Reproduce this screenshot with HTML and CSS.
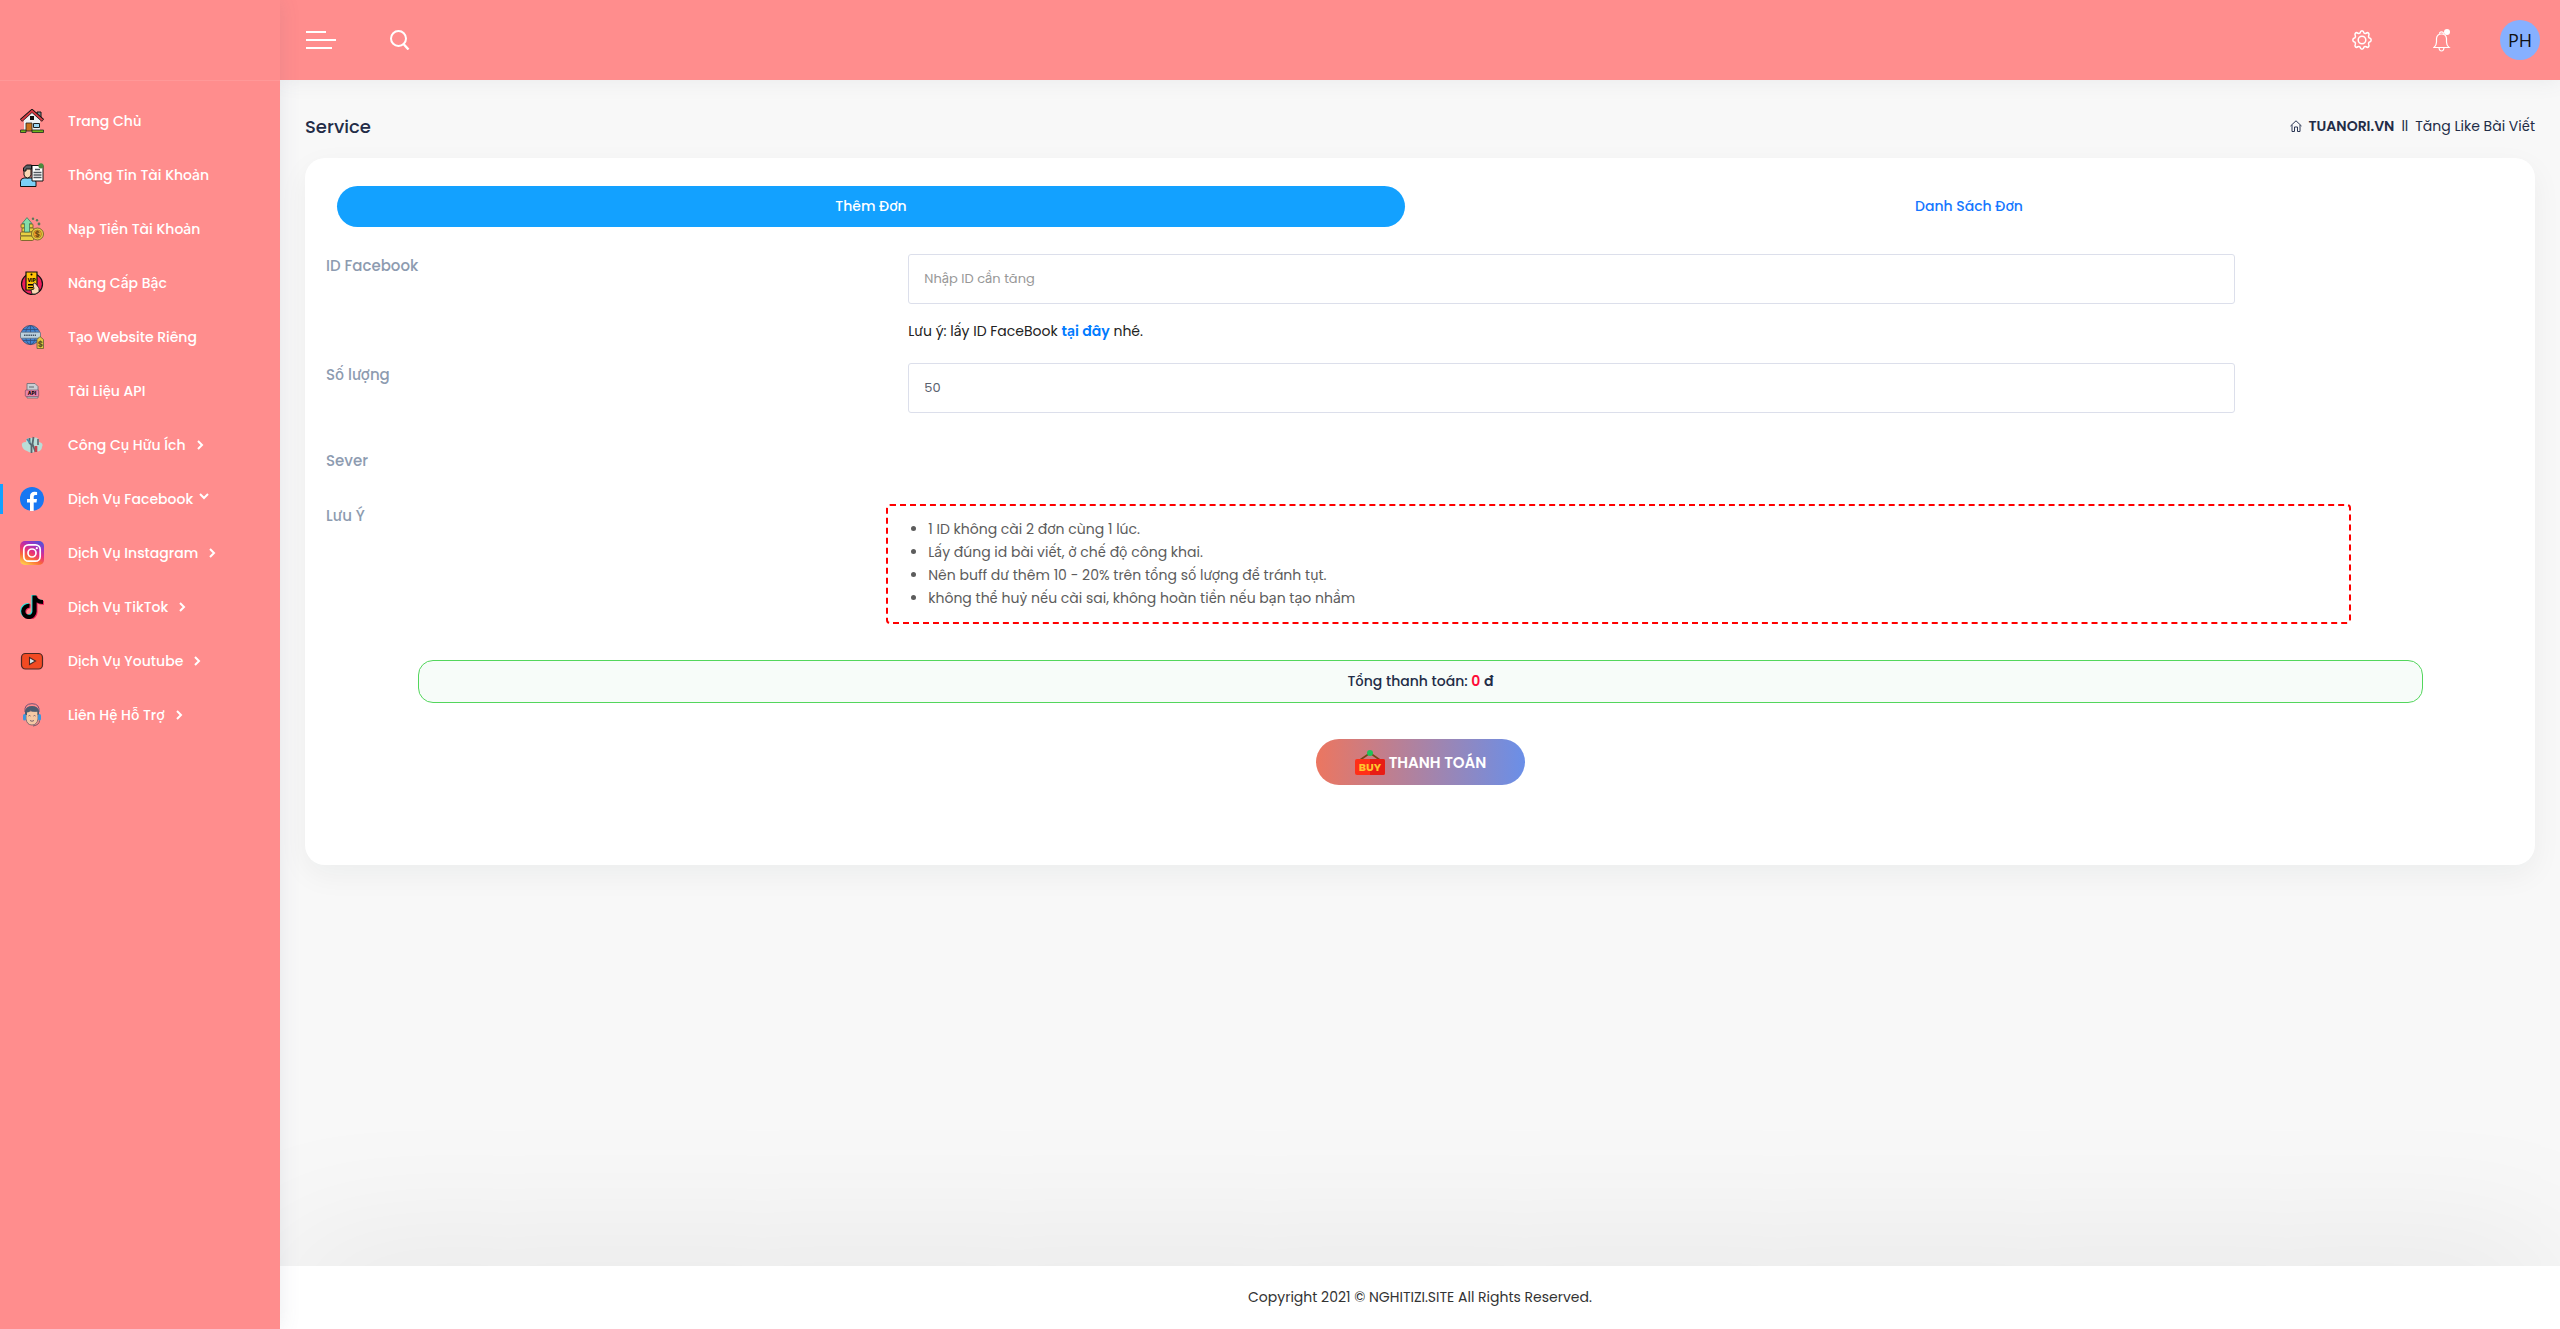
FILE: index.html
```
<!DOCTYPE html>
<html lang="vi">
<head>
  <meta charset="UTF-8" />
  <meta name="viewport" content="width=device-width, initial-scale=1" />
  <title>Tăng Like Bài Viết</title>
  <link rel="stylesheet" href="styles.css">
</head>
<body>

  <div class="layout">
    <aside class="sidebar">
      <div class="brand"></div>
      <nav class="menu">
        <a href="#">
          <svg class="icon" viewBox="0 0 24 24"><path fill="#7b8d94" stroke="#111" d="M17 3h4v7h-4z"/><path fill="#eef2f5" d="M4 11l8-8 8 8v10H4z"/><path fill="none" stroke="#111" stroke-width="3.4" d="M1 11.500L12 1.800l11 9.700"/><path fill="none" stroke="#d83c44" stroke-width="1.800" d="M1.500 11.200L12 2l10.500 9.200"/><path d="M10 7h4v4h-4z" fill="#111"/><path fill="#c8711c" stroke="#222" stroke-width=".8" d="M6 14h6v8H6z"/><path fill="#9bd6f4" stroke="#222" d="M13.500 14.500h6v4h-6z"/><path fill="#6fb51b" stroke="#222" stroke-width=".8" d="M.5 21H6v2.500H.5zM12 21h11.500v2.500H12z"/></svg>
          <span>Trang Chủ</span>
        </a>
        <a href="#">
          <svg class="icon" viewBox="0 0 24 24"><path fill="#7cd0f7" stroke="#111" d="M.5 23.500v-5q0-3 3.500-3.500h8q4 .5 4 4v4.500z"/><path fill="#f8d6b4" stroke="#111" d="M4 5h7v7q-1 3-3.500 3T4 12z"/><path fill="#596066" stroke="#111" d="M3.500 8V5l3-3h5v4H6v2z"/><path fill="#fff" stroke="#111" d="M12 2.500h11v15.500H12z"/><path stroke="#50585f" stroke-width="1.500" d="M15 6.500h5M13.500 9.500h8M13.500 12h8M13.500 14.500h8"/><circle cx="21" cy="2.800" r="2.600" fill="#4c8a3d"/></svg>
          <span>Thông Tin Tài Khoản</span>
        </a>
        <a href="#">
          <svg class="icon" viewBox="0 0 24 24"><g fill="#e8cf43" stroke="#756228" stroke-width=".9"><rect x="1" y="7" width="12" height="4" rx="1"/><rect x="2" y="11" width="12" height="4" rx="1"/><rect x=".5" y="15" width="13" height="4" rx="1"/><rect x=".5" y="19" width="13" height="4.500" rx="1"/><circle cx="17.500" cy="17" r="6"/></g><circle cx="17.500" cy="17" r="4" fill="#f3a72f" stroke="#8a6a20" stroke-width=".6"/><text x="17.500" y="20" class="tiny" fill="#6e4c14">$</text><path fill="#83dcaa" stroke="#44765b" stroke-width=".8" d="M7 .6l5 6H9.500V15h-5V6.600H2z"/><g fill="#58795a"><circle cx="13" cy="1.800" r="1.200"/><circle cx="17" cy="3.300" r="1.200"/><circle cx="19" cy="7" r="1.400"/></g></svg>
          <span>Nạp Tiền Tài Khoản</span>
        </a>
        <a href="#">
          <svg class="icon" viewBox="0 0 24 24"><circle cx="12" cy="13" r="10.500" fill="#ee1d5b" stroke="#111" stroke-width="1.200"/><path fill="#ffc107" stroke="#111" stroke-width="1.200" d="M6 1h11v18H6z"/><circle cx="11.500" cy="3.500" r="1"/><text x="11.500" y="11" class="vip">VIP</text><path d="M8 13h7v1.500H8zM8 16h5v1.200H8z"/><path fill="#fbd9b5" stroke="#111" stroke-width=".8" d="M11 19l3-1-1-5q2-2 3 0l3 4v4q-4 3-7 2z"/></svg>
          <span>Nâng Cấp Bậc</span>
        </a>
        <a href="#">
          <svg class="icon" viewBox="0 0 24 24"><circle cx="10.500" cy="10" r="9.600" fill="#4485d0" stroke="#454d68" stroke-width=".8"/><g fill="none" stroke="#304d7c" stroke-width=".8"><ellipse cx="10.500" cy="10" rx="5" ry="9.500"/><path d="M10.500.5v19M3 4.500h15M3 15.500h15"/></g><rect x=".5" y="7.200" width="20" height="6" rx=".8" fill="#bcd1dc" stroke="#5b6b7c" stroke-width=".7"/><path stroke="#435466" stroke-width="1.600" stroke-dasharray="1.500 .7" d="M4 10.200h12"/><path fill="#e6c73e" stroke="#685d34" stroke-width=".8" d="M17 14.500l3-3 3.500 3v9H17z"/><text x="20.300" y="22" class="tiny" fill="#5f5121">$</text></svg>
          <span>Tạo Website Riêng</span>
        </a>
        <a href="#">
          <svg class="icon" viewBox="0 0 24 24"><path fill="#c9ced3" stroke="#686c73" stroke-width=".8" d="M7 4.500h8l3 3V19H7z"/><path stroke="#60666d" d="M9 8h5"/><rect x="5.300" y="11" width="13.400" height="6.500" rx="1" fill="#ec83a8" stroke="#6c465a" stroke-width=".6"/><text x="12" y="16" class="api">API</text></svg>
          <span>Tài Liệu API</span>
        </a>
        <a href="#">
          <svg class="icon" viewBox="0 0 24 24"><path fill="#b9ddd7" d="M2 13q-1-4 4-4 0-5 6-4 7-2 7 4 5 1 3 5 0 5-8 5-3 2-7-1-4-1-5-5z"/><g fill="none" stroke-width="1.800"><path stroke="#59676f" d="M9.500 5v5l2 2v8M13.500 4l-1 7 3 8"/><path stroke="#4b89a8" d="M7 6l3 4"/><path stroke="#c9414b" stroke-width="2.600" d="M16 13v6"/><path stroke="#63737a" d="M18 6v6"/></g></svg>
          <span>Công Cụ Hữu Ích</span>
          <svg class="arrow" viewBox="0 0 10 10"><path d="M3 1l4 4-4 4"/></svg>
        </a>
        <a href="#" class="active">
          <svg class="icon" viewBox="0 0 24 24"><circle cx="12" cy="12" r="12" fill="#1877f2"/><path fill="#fff" d="M10 24v-8.500H7V12h3V9.400C10 6.400 11.800 4.800 14.500 4.800q1.300 0 2.600.2v3h-1.500c-1.500 0-1.900.9-1.900 1.900V12H17l-.5 3.500h-2.800V24z"/></svg>
          <span>Dịch Vụ Facebook</span>
          <svg class="arrow down" viewBox="0 0 10 10"><path d="M1 3l4 4 4-4"/></svg>
        </a>
        <a href="#">
          <svg class="icon" viewBox="0 0 24 24"><defs><linearGradient id="insta" x1=".2" y1="1" x2=".7" y2="0"><stop offset="0" stop-color="#ffd04d"/><stop offset=".3" stop-color="#fb6b36"/><stop offset=".55" stop-color="#e8317b"/><stop offset=".8" stop-color="#a330bf"/><stop offset="1" stop-color="#5b4fd5"/></linearGradient></defs><rect width="24" height="24" rx="5" fill="url(#insta)"/><g fill="none" stroke="#fff" stroke-width="1.700"><rect x="3.800" y="3.800" width="16.400" height="16.400" rx="4.800"/><circle cx="12" cy="12" r="4"/></g><circle cx="16.800" cy="7.200" r="1.100" fill="#fff"/></svg>
          <span>Dịch Vụ Instagram</span>
          <svg class="arrow" viewBox="0 0 10 10"><path d="M3 1l4 4-4 4"/></svg>
        </a>
        <a href="#">
          <svg class="icon" viewBox="0 0 24 24"><g fill="none" stroke-width="4.200"><path stroke="#25e5df" d="M13.500 0v16a5.600 5.600 0 1 1-5-5.800M13.500 1q1 5.500 8.500 6"/><path stroke="#f0245c" d="M15.500 1v16a5.600 5.600 0 1 1-5-5.500M15.500 2q1 5.500 8.500 6"/><path stroke="#000" d="M14.500 .5v16a5.600 5.600 0 1 1-5-5.700M14.500 1.500q1.500 5.500 8.500 5.500"/></g></svg>
          <span>Dịch Vụ TikTok</span>
          <svg class="arrow" viewBox="0 0 10 10"><path d="M3 1l4 4-4 4"/></svg>
        </a>
        <a href="#">
          <svg class="icon" viewBox="0 0 24 24"><rect x="1.500" y="4.500" width="21" height="15.500" rx="4" fill="#f24a23" stroke="#4c2925" stroke-width="1.200"/><path fill="#d9e8ec" stroke="#4c2925" stroke-width="1.100" d="M9.500 8.500l6 3.500-6 3.500z"/></svg>
          <span>Dịch Vụ Youtube</span>
          <svg class="arrow" viewBox="0 0 10 10"><path d="M3 1l4 4-4 4"/></svg>
        </a>
        <a href="#">
          <svg class="icon" viewBox="0 0 24 24"><path fill="none" stroke="#715277" d="M5 9Q4 .7 12 .7T19 9"/><path fill="#f5c9a4" stroke="#635b68" stroke-width=".8" d="M6 8h12v8q-1 6-6 6t-6-6z"/><path fill="#4b5c70" d="M5 12V8q1-5 7-5t7 5v4h-1.500V8.500q-5 1-7-1-1 2-3.500 2V12z"/><rect x="3" y="11" width="3" height="6.500" rx="1.500" fill="#3d94db"/><rect x="18" y="11" width="3" height="6.500" rx="1.500" fill="#3d94db"/><path fill="none" stroke="#695365" stroke-width=".9" d="M8.500 13q1-1 2 0m3 0q1-1 2 0M10 17.500q2 1.500 4 0M19.500 17.500q0 4.500-6.500 5.500"/></svg>
          <span>Liên Hệ Hỗ Trợ</span>
          <svg class="arrow" viewBox="0 0 10 10"><path d="M3 1l4 4-4 4"/></svg>
        </a>
      </nav>
    </aside>

    <div class="main">
      <header class="topbar">
        <button class="icon-btn" aria-label="Menu">
          <svg width="30" height="18" viewBox="0 0 30 18"><path stroke="#fff" stroke-width="2" d="M0 1h20M0 9h30M0 17h26"/></svg>
        </button>
        <button class="icon-btn" aria-label="Tìm kiếm">
          <svg width="20" height="20" viewBox="0 0 20 20"><circle cx="8.500" cy="8.500" r="7.500" fill="none" stroke="#fff" stroke-width="2"/><path stroke="#fff" stroke-width="2.400" d="M13.500 14l5 5.500"/></svg>
        </button>
        <div class="topbar-right">
          <button class="icon-btn" aria-label="Cài đặt">
            <svg width="20" height="20" viewBox="0 0 20 20"><g fill="none" stroke="#fff" stroke-width="1.500"><path stroke-linejoin="round" d="M8 3Q8.500.8 10 .8T12 3q.8.800 2 .3 1.500-1.200 2.500-.2t.2 2.600q-.5 1.200.3 2 2.200.5 2.200 2.300T17 12.300q-.8.800-.3 2 .8 1.600-.2 2.600t-2.500-.2q-1.200-.5-2 .3-.5 2.200-2 2.200T8 17q-.8-.8-2-.3-1.500 1.200-2.500.2t-.2-2.600q.5-1.200-.3-2Q.8 11.800.8 10T3 7.700q.8-.8.3-2-.8-1.600.2-2.600t2.500.2q1.200.5 2-.3z"/><circle cx="10" cy="10" r="3.800"/></g></svg>
          </button>
          <button class="icon-btn" aria-label="Thông báo">
            <svg width="18" height="24" viewBox="0 0 18 24"><g fill="none" stroke="#fff" stroke-width="1.200"><path d="M1 19.500q2.500-2 2.500-5.500v-3.500Q4 6 8.500 6t5 4.500V14q0 3.500 2.500 5.500z"/><path d="M6.500 5.800q0-2 2-2t2 2M6 20q.5 3 2.500 3t2.500-3"/></g><circle cx="14" cy="4" r="3" fill="#fff"/></svg>
          </button>
          <a href="#" class="avatar">PH</a>
        </div>
      </header>

      <main class="content">
        <div class="page-head">
          <h1>Service</h1>
          <div class="breadcrumb">
            <svg width="12" height="12" viewBox="0 0 12 12"><path fill="none" stroke="#2b3654" d="M.5 6L6 .8 11.500 6M2 5v6.500h2.500V7h3v4.500H10V5"/></svg>
            <a href="#">TUANORI.VN</a>
            <span>ll</span>
            <span>Tăng Like Bài Viết</span>
          </div>
        </div>

        <form class="card">
          <div class="tabs">
            <button type="button" class="tab active">Thêm Đơn</button>
            <button type="button" class="tab">Danh Sách Đơn</button>
          </div>

          <div class="row">
            <label for="idfb">ID Facebook</label>
            <div class="field">
              <input type="text" id="idfb" placeholder="Nhập ID cần tăng" />
              <p class="hint">Lưu ý: lấy ID FaceBook <a href="#">tại đây</a> nhé.</p>
            </div>
          </div>

          <div class="row">
            <label for="amount">Số lượng</label>
            <div class="field">
              <input type="text" id="amount" value="50" />
            </div>
          </div>

          <div class="row server">
            <span class="label">Sever</span>
          </div>

          <div class="row">
            <span class="label">Lưu Ý</span>
            <ul class="notice">
              <li>1 ID không cài 2 đơn cùng 1 lúc.</li>
              <li>Lấy đúng id bài viết, ở chế độ công khai.</li>
              <li>Nên buff dư thêm 10 - 20% trên tổng số lượng để tránh tụt.</li>
              <li>không thể huỷ nếu cài sai, không hoàn tiền nếu bạn tạo nhầm</li>
            </ul>
          </div>

          <div class="total">Tổng thanh toán: <b class="price">0</b> <b>đ</b></div>

          <button type="button" class="pay">
            <svg width="30" height="30" viewBox="0 0 30 30"><path fill="none" stroke="#7a4516" stroke-width="1.600" d="M5 13l10-7 10 7"/><circle cx="15" cy="6" r="3" fill="#1fc25a"/><rect y="12" width="30" height="16" rx="2" fill="#ff2f17"/><path fill="#e81c14" d="M15 12h13a2 2 0 0 1 2 2v12a2 2 0 0 1-2 2H15z"/><text x="15" y="24" class="buy">BUY</text></svg>
            THANH TOÁN
          </button>
        </form>
      </main>

      <footer class="footer">Copyright 2021 © NGHITIZI.SITE All Rights Reserved.</footer>
    </div>
  </div>

</body>
</html>
```
FILE: styles.css
```
* {
  box-sizing: border-box;
}
body {
  margin: 0;
  font-family: Poppins, Inter, "Noto Sans", sans-serif;
  font-size: 14px;
  line-height: 23px;
  color: #232c47;
  background-color: #f8f8f8;
}
a {
  color: inherit;
  text-decoration: none;
}
button {
  font-family: inherit;
  border: 0;
  background: none;
  cursor: pointer;
}
.layout {
  display: flex;
  min-height: 100vh;
}

/* sidebar */
.sidebar {
  position: relative;
  z-index: 2;
  width: 280px;
  flex-shrink: 0;
  background: #ff8d8d;
  box-shadow: 0 0 20px rgba(89, 102, 122, 0.12);
}
.brand {
  height: 81px;
  border-bottom: 1px solid #ff9898;
}
.menu {
  padding-top: 13px;
}
.menu a {
  display: flex;
  align-items: center;
  height: 54px;
  padding-left: 20px;
  color: #fff;
  font-weight: 500;
}
.menu a.active {
  background: linear-gradient(#13a1ff, #13a1ff) left center / 3px 30px no-repeat;
}
.icon {
  width: 24px;
  height: 24px;
  margin-right: 24px;
}
.arrow {
  width: 10px;
  height: 10px;
  margin-left: 9px;
  fill: none;
  stroke: #fff;
  stroke-width: 2;
}
.arrow.down {
  margin-left: 6px;
  margin-bottom: 6px;
}
.tiny, .vip, .api, .buy {
  font-weight: 700;
  text-anchor: middle;
}
.tiny { font-size: 8px; }
.vip { font-size: 5px; }
.api { font-size: 5px; }
.buy { font-size: 11px; fill: #ffc52e; }

/* right side */
.main {
  flex: 1;
  min-width: 0;
  display: flex;
  flex-direction: column;
}
.topbar {
  height: 80px;
  display: flex;
  align-items: center;
  gap: 54px;
  padding: 0 20px 0 26px;
  background: #ff8d8d;
  box-shadow: 0 0 20px rgba(89, 102, 122, 0.1);
}
.icon-btn {
  padding: 0;
  display: flex;
}
.topbar-right {
  display: flex;
  align-items: center;
  gap: 61px;
  margin-left: auto;
}
.avatar {
  width: 40px;
  height: 40px;
  margin-left: -12px;
  border-radius: 50%;
  background: #86b0ff;
  color: #111;
  font: 18px/40px "Open Sans", sans-serif;
  text-align: center;
}
.content {
  flex: 1;
  padding: 32px 25px 40px;
}
.page-head {
  display: flex;
  justify-content: space-between;
  align-items: center;
  height: 28px;
  margin-bottom: 18px;
}
h1 {
  margin: 0;
  font-size: 18px;
  font-weight: 500;
}
.breadcrumb {
  display: flex;
  align-items: center;
  gap: 7px;
}
.breadcrumb a {
  font-weight: 600;
}
.card {
  display: flex;
  flex-direction: column;
  padding: 28px 20px 80px 21px;
  background: #fff;
  border-radius: 20px;
  box-shadow: 0 10px 30px rgba(8, 40, 30, 0.05);
}
.tabs {
  display: flex;
  gap: 30px;
  padding: 0 12px 0 11px;
  margin-bottom: 27px;
}
.tab {
  flex: 1;
  height: 41px;
  border-radius: 21px;
  font-size: 14px;
  font-weight: 500;
  color: #1677ff;
}
.tab.active {
  background: #13a1ff;
  color: #fff;
}
.row {
  display: flex;
  margin-bottom: 20px;
}
.row label, .label {
  width: 26.6%;
  font-size: 15px;
  font-weight: 500;
  color: #8d9bb0;
}
.field {
  width: 60.6%;
}
.field input {
  display: block;
  width: 100%;
  height: 50px;
  padding: 0 15px;
  border: 1px solid #dcdfeb;
  border-radius: 3px;
  font-family: inherit;
  font-size: 13px;
  color: #59606e;
}
.field input::placeholder {
  color: #989898;
}
.hint {
  margin: 16px 0 0;
  color: #222;
}
.hint a {
  color: #007bff;
  font-weight: 600;
}
.server {
  margin-top: 16px;
  margin-bottom: 32px;
}
.notice {
  width: 66.9%;
  margin: 0 0 0 -22px;
  padding: 12px 40px;
  border: 2px dashed #f00;
  border-radius: 4px;
  color: #5c5c5c;
}
.total {
  align-self: center;
  width: 91.6%;
  margin: 16px 0 36px;
  padding: 9px;
  border: 1px solid #53d65c;
  border-radius: 15px;
  background: #f7fcf9;
  text-align: center;
  font-weight: 500;
}
.total b {
  font-weight: 600;
}
.price {
  color: #ff0b37;
}
.pay {
  align-self: center;
  display: flex;
  align-items: center;
  gap: 4px;
  height: 46px;
  padding: 0 39px;
  border-radius: 23px;
  background: linear-gradient(to right, #ec7660, #6a8fe8);
  color: #fff;
  font-size: 15px;
  font-weight: 600;
}
.footer {
  padding: 20px;
  background: #fff;
  box-shadow: 0 0 150px rgba(0, 0, 0, 0.13);
  text-align: center;
  color: #333;
}
```
